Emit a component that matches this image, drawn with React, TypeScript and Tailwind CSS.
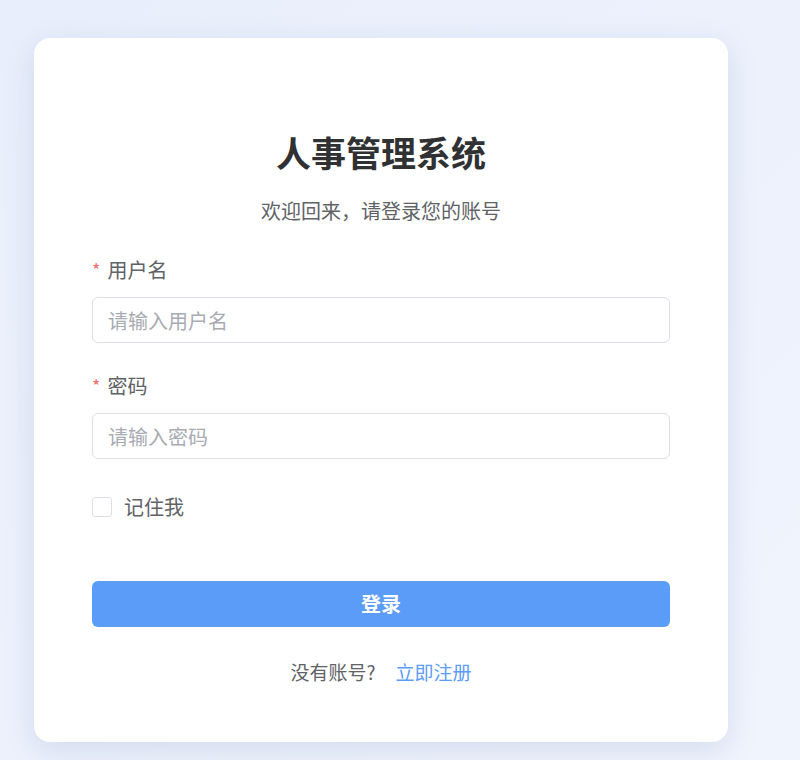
import React from 'react';

const font = { fontFamily: '"Noto Sans CJK SC", "Noto Sans", sans-serif' };

const Field: React.FC<{ label: string; placeholder: string; type?: string; className?: string }> = ({
  label,
  placeholder,
  type = 'text',
  className = '',
}) => (
  <div className={className}>
    <div className="flex items-center h-[28px] text-[20px] leading-[28px] text-[#606266]">
      <span className="text-[#f56c6c] text-[18px] mr-[7px] -mt-[2px]">*</span>
      <span>{label}</span>
    </div>
    <input
      type={type}
      placeholder={placeholder}
      className="mt-[13px] w-full h-[46px] px-[15px] text-[20px] text-[#606266] placeholder:text-[#a8abb2] border border-[#dcdfe6] rounded-[6px] outline-none bg-white"
      style={font}
    />
  </div>
);

const App: React.FC = () => {
  return (
    <div
      className="w-[800px] h-[760px] overflow-hidden bg-gradient-to-br from-[#e8eefb] to-[#f0f4fd] pt-[38px] pl-[34px]"
      style={font}
    >
      <div className="w-[694px] h-[704px] bg-white rounded-[16px] shadow-[0_8px_28px_rgba(120,140,180,0.22)] px-[58px] pt-[93px] pb-[56px]">
        <h1 className="text-center text-[35px] leading-[42px] font-bold text-[#303133]">人事管理系统</h1>
        <p className="mt-[24px] text-center text-[20px] leading-[28px] text-[#606266]">欢迎回来，请登录您的账号</p>

        <Field className="mt-[31px]" label="用户名" placeholder="请输入用户名" />
        <Field className="mt-[29px]" label="密码" placeholder="请输入密码" type="password" />

        <label className="mt-[34px] flex items-center h-[28px] text-[20px] text-[#606266]">
          <span className="w-[20px] h-[20px] border border-[#dcdfe6] rounded-[3px] bg-white"></span>
          <span className="ml-[12px]">记住我</span>
        </label>

        <button className="mt-[60px] w-full h-[46px] bg-[#5b9cf8] text-white text-[20px] font-bold rounded-[6px]">
          登录
        </button>

        <div className="mt-[31px] flex justify-center items-center h-[28px] text-[19px] leading-[28px]">
          <span className="text-[#606266]">没有账号?</span>
          <span className="ml-[20px] text-[#5b9cf8]">立即注册</span>
        </div>
      </div>
    </div>
  );
};

export default App;
